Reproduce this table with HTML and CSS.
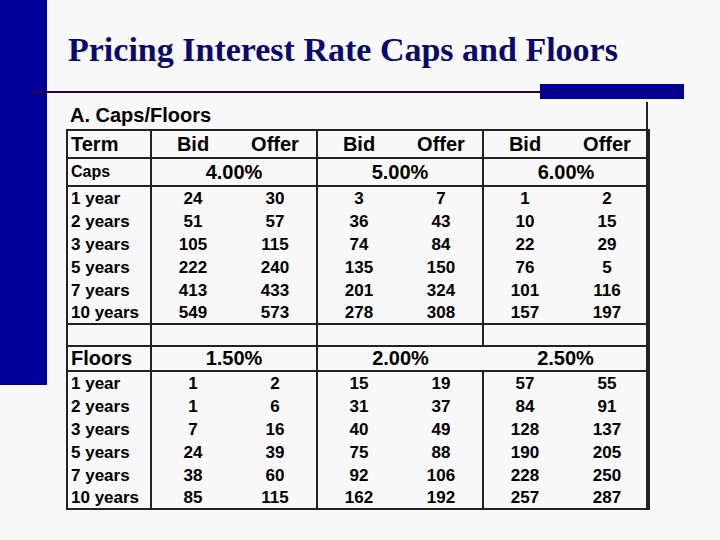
FILE: index.html
```html
<!DOCTYPE html>
<html lang="en">
<head>
<meta charset="utf-8">
<title>Pricing Interest Rate Caps and Floors</title>
<link rel="stylesheet" href="styles.css">
</head>
<body>
<div class="slide">
  <div class="sidebar"></div>
  <h1 class="title">Pricing Interest Rate Caps and Floors</h1>
  <div class="rule"><div class="line"></div><div class="block"></div></div>
  <div class="figure">
    <div class="caption">A. Caps/Floors</div>
    <table class="grid">
      <colgroup>
        <col class="c-term"><col class="c-num"><col class="c-num"><col class="c-num"><col class="c-num"><col class="c-num"><col class="c-num">
      </colgroup>
      <tr class="head hb"><td class="lbl">Term</td><td class="v">Bid</td><td>Offer</td><td class="v">Bid</td><td>Offer</td><td class="v">Bid</td><td>Offer</td></tr>
      <tr class="strike hb"><td class="lbl small">Caps</td><td class="v" colspan="2">4.00%</td><td class="v" colspan="2">5.00%</td><td class="v" colspan="2">6.00%</td></tr>
      <tr class="d"><td class="lbl">1 year</td><td class="v">24</td><td>30</td><td class="v">3</td><td>7</td><td class="v">1</td><td>2</td></tr>
      <tr class="d"><td class="lbl">2 years</td><td class="v">51</td><td>57</td><td class="v">36</td><td>43</td><td class="v">10</td><td>15</td></tr>
      <tr class="d"><td class="lbl">3 years</td><td class="v">105</td><td>115</td><td class="v">74</td><td>84</td><td class="v">22</td><td>29</td></tr>
      <tr class="d"><td class="lbl">5 years</td><td class="v">222</td><td>240</td><td class="v">135</td><td>150</td><td class="v">76</td><td>5</td></tr>
      <tr class="d"><td class="lbl">7 years</td><td class="v">413</td><td>433</td><td class="v">201</td><td>324</td><td class="v">101</td><td>116</td></tr>
      <tr class="d mid hb"><td class="lbl">10 years</td><td class="v">549</td><td>573</td><td class="v">278</td><td>308</td><td class="v">157</td><td>197</td></tr>
      <tr class="empty hb"><td></td><td class="v" colspan="2"></td><td class="v" colspan="2"></td><td class="v" colspan="2"></td></tr>
      <tr class="strike floors hb"><td class="lbl">Floors</td><td class="v" colspan="2">1.50%</td><td class="v" colspan="2">2.00%</td><td colspan="2">2.50%</td></tr>
      <tr class="d"><td class="lbl">1 year</td><td class="v">1</td><td>2</td><td class="v">15</td><td>19</td><td class="v">57</td><td>55</td></tr>
      <tr class="d"><td class="lbl">2 years</td><td class="v">1</td><td>6</td><td class="v">31</td><td>37</td><td class="v">84</td><td>91</td></tr>
      <tr class="d"><td class="lbl">3 years</td><td class="v">7</td><td>16</td><td class="v">40</td><td>49</td><td class="v">128</td><td>137</td></tr>
      <tr class="d"><td class="lbl">5 years</td><td class="v">24</td><td>39</td><td class="v">75</td><td>88</td><td class="v">190</td><td>205</td></tr>
      <tr class="d"><td class="lbl">7 years</td><td class="v">38</td><td>60</td><td class="v">92</td><td>106</td><td class="v">228</td><td>250</td></tr>
      <tr class="d last"><td class="lbl">10 years</td><td class="v">85</td><td>115</td><td class="v">162</td><td>192</td><td class="v">257</td><td>287</td></tr>
    </table>
  </div>
</div>
</body>
</html>
```

FILE: styles.css
```css
html, body {
  margin: 0;
  padding: 0;
  background: #f8f8f8;
}

.slide {
  position: relative;
  width: 720px;
  height: 540px;
  overflow: hidden;
  background: #f8f8f8;
}

.sidebar {
  position: absolute;
  left: 0;
  top: 0;
  width: 47px;
  height: 385px;
  background: #000099;
}

.title {
  position: relative;
  margin: 0;
  padding: 30px 0 0 68px;
  font-family: "Liberation Serif", "Times New Roman", serif;
  font-weight: bold;
  font-size: 34px;
  line-height: 40px;
  color: #0a0a6e;
  white-space: nowrap;
}

.rule {
  position: relative;
  display: flex;
  align-items: center;
  margin: 14px 0 0 30px;
  width: 654px;
  height: 15px;
}

.rule .line {
  flex: 1;
  height: 2px;
  background: #330033;
}

.rule .block {
  width: 144px;
  height: 15px;
  background: linear-gradient(to bottom, #000099 0, #000099 6px, #1a0078 6px, #1a0078 8px, #000099 8px);
}

.figure {
  margin: 3px 0 0 66px;
  width: 582px;
  box-sizing: border-box;
  border-right: 2px solid #222;
  font-family: "Liberation Sans", Arial, sans-serif;
  font-weight: bold;
  color: #000;
}

.caption {
  height: 27px;
  line-height: 27px;
  font-size: 20px;
  padding-left: 4px;
  margin-right: -2px;
}

.grid {
  width: 584px;
  border-collapse: collapse;
  border: 2px solid #222;
  table-layout: fixed;
}

.c-term { width: 84px; }
.c-num { width: 83px; }

.grid td {
  padding: 0;
  text-align: center;
  vertical-align: middle;
  white-space: nowrap;
}

.grid td.lbl {
  text-align: left;
  padding-left: 3px;
}

.grid td.v {
  border-left: 2px solid #222;
}

.grid tr.hb td {
  border-bottom: 2px solid #222;
}

.head td {
  height: 26px;
  font-size: 20px;
}

.strike td {
  height: 26px;
  font-size: 20px;
}

.strike td.small {
  font-size: 16px;
}

.floors td {
  height: 23px;
}

.d td {
  height: 23px;
  font-size: 17px;
}

.d.mid td {
  height: 21px;
}

.d.last td {
  height: 21px;
}

.empty td {
  height: 20px;
}
```
